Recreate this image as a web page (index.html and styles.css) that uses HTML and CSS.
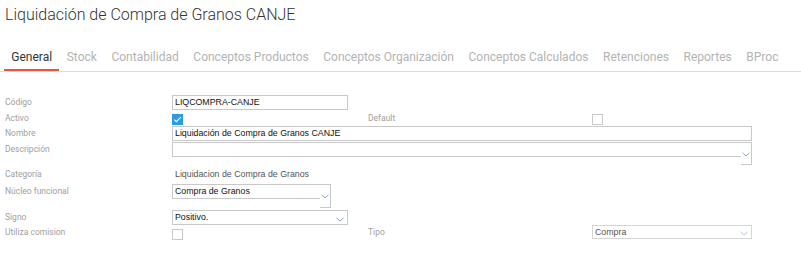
FILE: index.html
```html
<!DOCTYPE html>
<html lang="es">
<head>
<meta charset="utf-8">
<title>Liquidación de Compra de Granos CANJE</title>
<link rel="stylesheet" href="styles.css">
</head>
<body>
<h1 class="title">Liquidación de Compra de Granos CANJE</h1>
<nav class="tabs">
  <span class="tab active">General</span>
  <span class="tab">Stock</span>
  <span class="tab">Contabilidad</span>
  <span class="tab">Conceptos Productos</span>
  <span class="tab">Conceptos Organización</span>
  <span class="tab">Conceptos Calculados</span>
  <span class="tab">Retenciones</span>
  <span class="tab">Reportes</span>
  <span class="tab">BProc</span>
</nav>
<div class="form">
  <div class="row r-codigo">
    <label class="lbl">Código</label>
    <div class="input w176">LIQCOMPRA-CANJE</div>
  </div>
  <div class="row r-activo">
    <label class="lbl">Activo</label>
    <div class="cell"><span class="check on"><svg viewBox="0 0 11 11" width="11" height="11"><path d="M2.3 5.6 L4.4 7.7 L8.8 3.2" fill="none" stroke="#fff" stroke-width="1.1"/></svg></span></div>
    <label class="lbl lbl2">Default</label>
    <div class="cell"><span class="check"></span></div>
  </div>
  <div class="row r-nombre">
    <label class="lbl">Nombre</label>
    <div class="input span3">Liquidación de Compra de Granos CANJE</div>
  </div>
  <div class="row r-desc">
    <label class="lbl">Descripción</label>
    <div class="combo span3">
      <div class="combo-field"></div>
      <div class="combo-btn"><svg class="chev" viewBox="0 0 8 5" width="8" height="5"><path d="M0.5 0.8 L4 4 L7.5 0.8" fill="none" stroke="#7fa9e0" stroke-width="1"/></svg></div>
    </div>
  </div>
  <div class="row r-cat">
    <label class="lbl">Categoría</label>
    <div class="plain">Liquidacion de Compra de Granos</div>
  </div>
  <div class="row r-nucleo">
    <label class="lbl">Núcleo funcional</label>
    <div class="combo w160">
      <div class="combo-field">Compra de Granos</div>
      <div class="combo-btn"><svg class="chev" viewBox="0 0 8 5" width="8" height="5"><path d="M0.5 0.8 L4 4 L7.5 0.8" fill="none" stroke="#7fa9e0" stroke-width="1"/></svg></div>
    </div>
  </div>
  <div class="row r-signo">
    <label class="lbl">Signo</label>
    <div class="select w176"><span>Positivo.</span><svg class="chev" viewBox="0 0 8 5" width="8" height="5"><path d="M0.5 0.8 L4 4 L7.5 0.8" fill="none" stroke="#7fa9e0" stroke-width="1"/></svg></div>
  </div>
  <div class="row r-util">
    <label class="lbl">Utiliza comision</label>
    <div class="cell"><span class="check"></span></div>
    <label class="lbl lbl2">Tipo</label>
    <div class="select soft"><span>Compra</span><svg class="chev" viewBox="0 0 8 5" width="8" height="5"><path d="M0.5 0.8 L4 4 L7.5 0.8" fill="none" stroke="#a9c6ee" stroke-width="1"/></svg></div>
  </div>
</div>
</body>
</html>
```

FILE: styles.css
```css
* { box-sizing: border-box; }
html, body { margin: 0; padding: 0; background: #fff; }
body { font-family: Roboto, "Liberation Sans", Arial, sans-serif; color: #333; }

.title {
  margin: 0;
  padding: 5px 0 0 5px;
  height: 30px;
  font-size: 16px;
  font-weight: 300;
  color: #333;
  line-height: 19px;
}

.tabs {
  display: flex;
  margin-top: 16px;
  padding-left: 4px;
  border-bottom: 1px solid #dcdcdc;
  height: 26px;
}
.tab {
  padding: 4px 7.3px 0;
  font-size: 12px;
  line-height: 15px;
  color: #b3b3b3;
  height: 25px;
  white-space: nowrap;
}
.tab.active {
  color: #333;
  border-bottom: 2px solid #ea5440;
}

.form {
  padding-top: 23px;
  padding-left: 5px;
}
.row {
  display: grid;
  grid-template-columns: 167px 176px 244px 160px;
  align-items: start;
}
.lbl {
  font-size: 8.5px;
  color: #a0a0a0;
  line-height: 15px;
  white-space: nowrap;
}
.lbl2 { padding-left: 20px; }

.input, .select, .combo-field {
  height: 15px;
  border: 1px solid #c8c8c8;
  font-family: "Liberation Sans", Arial, sans-serif;
  font-size: 8.8px;
  line-height: 13px;
  color: #111;
  padding-left: 2px;
  white-space: nowrap;
  overflow: hidden;
}
.w176 { width: 176px; }
.span3 { grid-column: 2 / 5; width: 580px; }
.w160 { width: 159px; }

.cell { height: 14px; display: flex; align-items: center; }
.check {
  display: block;
  width: 11px;
  height: 11px;
  border: 1px solid #c8c8c8;
  background: #fff;
  margin-top: 2px;
}
.check.on { border: none; background: #2d9be0; }
.check svg { display: block; }

.r-codigo { height: 16px; }
.r-activo { height: 15px; }
.r-nombre { height: 16px; }
.r-desc { height: 24px; }
.r-cat { height: 15px; margin-top: 1px; }
.r-nucleo { height: 26px; margin-top: 2px; }
.r-signo { height: 15px; }
.r-util { height: 15px; }

.combo { display: flex; align-items: flex-start; }
.combo-field { flex: 1; border-right: none; }
.combo-btn {
  width: 11px;
  height: 23px;
  border: 1px solid #c8c8c8;
  border-left: none;
  display: flex;
  justify-content: center;
  padding-top: 9px;
}
.r-nucleo .combo-btn { height: 24px; padding-top: 9px; }

.chev { display: block; }

.plain {
  font-family: "Liberation Sans", Arial, sans-serif;
  font-size: 8.8px;
  line-height: 15px;
  color: #555;
  padding-left: 3px;
  grid-column: 2 / 4;
}

.select {
  display: flex;
  align-items: center;
  justify-content: space-between;
  padding-right: 3px;
}
.select .chev { margin-top: 3px; }
.r-util .select { width: 160px; height: 14px; }
.select.soft { border-color: #d6d6d6; color: #555; }
.r-util .cell { height: 15px; }
.r-util .check { margin-top: 3px; }
```
